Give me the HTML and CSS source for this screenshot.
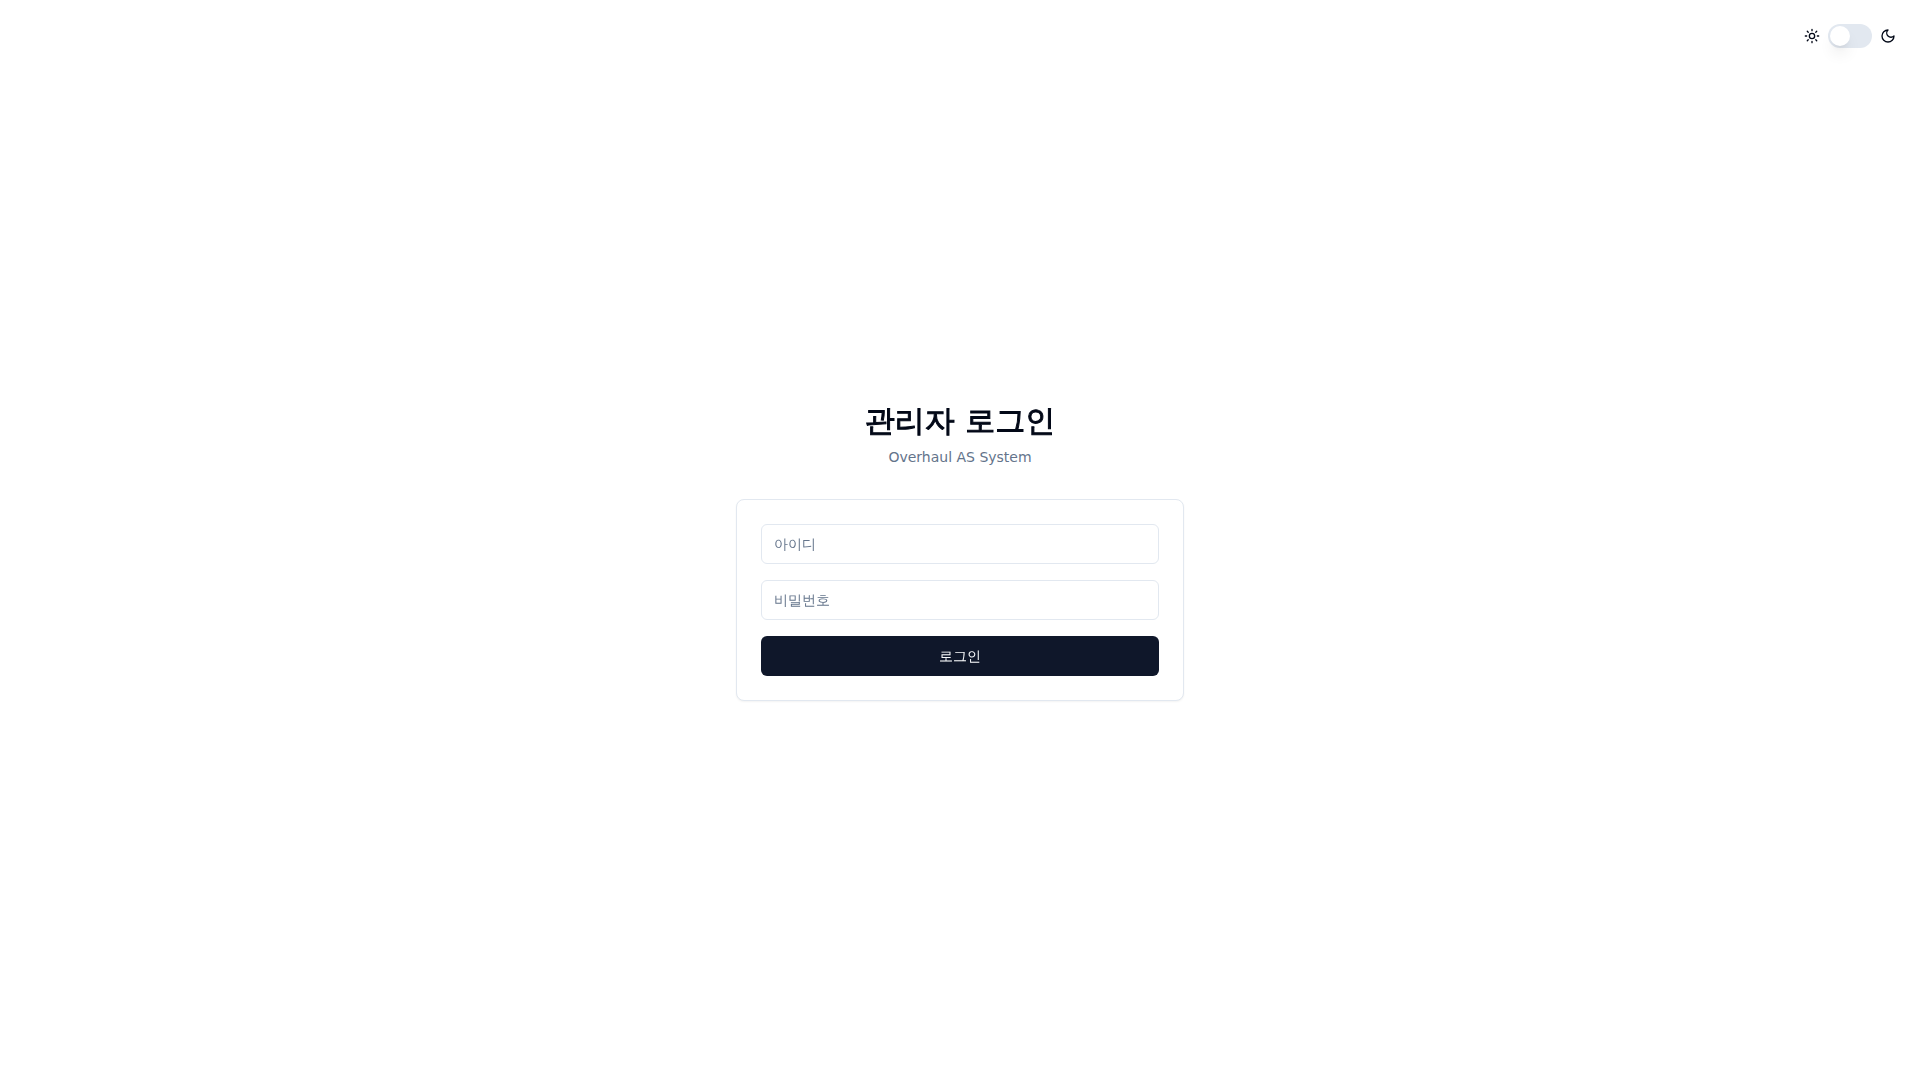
FILE: index.html
```html
<!DOCTYPE html>
<html lang="ko">
<head>
<meta charset="utf-8">
<meta name="viewport" content="width=device-width, initial-scale=1">
<title>관리자 로그인</title>
<link rel="stylesheet" href="styles.css">
</head>
<body>
<div class="theme-toggle">
  <svg class="icon" viewBox="0 0 24 24" aria-hidden="true"><circle cx="12" cy="12" r="4"/><path d="M12 2v2M12 20v2M4.93 4.93l1.41 1.41M17.66 17.66l1.41 1.41M2 12h2M20 12h2M6.34 17.66l-1.41 1.41M19.07 4.93l-1.41 1.41"/></svg>
  <input class="switch" type="checkbox" role="switch" aria-label="다크 모드">
  <svg class="icon" viewBox="0 0 24 24" aria-hidden="true"><path d="M12 3a6 6 0 0 0 9 9 9 9 0 1 1-9-9Z"/></svg>
</div>
<main class="page">
  <div class="login">
    <header class="heading">
      <h1 class="title">관리자 로그인</h1>
      <p class="subtitle">Overhaul AS System</p>
    </header>
    <form class="card">
      <input class="field" type="text" placeholder="아이디" aria-label="아이디">
      <input class="field" type="password" placeholder="비밀번호" aria-label="비밀번호">
      <button class="submit" type="submit">로그인</button>
    </form>
  </div>
</main>
</body>
</html>
```
FILE: styles.css
```css
*, *::before, *::after {
  box-sizing: border-box;
}

body {
  margin: 0;
  background: #fff;
  color: #020817;
  font-family: "DejaVu Sans", "WenQuanYi Zen Hei", "Noto Sans CJK KR", sans-serif;
  font-size: 16px;
  line-height: 24px;
}

.theme-toggle {
  position: absolute;
  top: 24px;
  right: 24px;
  display: flex;
  align-items: center;
  gap: 8px;
}

.icon {
  width: 16px;
  height: 16px;
  fill: none;
  stroke: currentColor;
  stroke-width: 2;
  stroke-linecap: round;
  stroke-linejoin: round;
}

.switch {
  appearance: none;
  width: 44px;
  height: 24px;
  margin: 0;
  padding: 2px;
  border-radius: 12px;
  background: #e2e8f0;
  cursor: pointer;
}

.switch::before {
  content: "";
  display: block;
  width: 20px;
  height: 20px;
  border-radius: 50%;
  background: #fff;
  box-shadow: 0 10px 15px -3px rgb(0 0 0 / 0.1), 0 4px 6px -4px rgb(0 0 0 / 0.1);
}

.switch:checked {
  background: #0f172a;
}

.switch:checked::before {
  margin-left: 20px;
}

.page {
  display: flex;
  align-items: center;
  justify-content: center;
  min-height: 100vh;
  padding: 40px 16px 16px;
}

.login {
  width: 100%;
  max-width: 448px;
}

.heading {
  margin-bottom: 32px;
  text-align: center;
}

/* The Korean face has no bold cut, so a stroke thickens the strokes. */
.title {
  margin: 0;
  font-size: 30px;
  font-weight: 700;
  line-height: 36px;
  -webkit-text-stroke: 1px currentColor;
}

.subtitle {
  margin: 8px 0 0;
  color: #64748b;
  font-size: 14px;
  line-height: 20px;
}

.card {
  display: flex;
  flex-direction: column;
  gap: 16px;
  padding: 24px;
  border: 1px solid #e2e8f0;
  border-radius: 8px;
  background: #fff;
  box-shadow: 0 1px 2px rgb(0 0 0 / 0.05);
}

.field {
  width: 100%;
  height: 40px;
  padding: 8px 12px;
  border: 1px solid #e2e8f0;
  border-radius: 6px;
  background: #fff;
  color: inherit;
  font: inherit;
  font-size: 14px;
  line-height: 20px;
}

.field::placeholder {
  color: #64748b;
}

.submit {
  height: 40px;
  padding: 8px 16px;
  border: 0;
  border-radius: 6px;
  background: #0f172a;
  color: #f8fafc;
  font: inherit;
  font-size: 14px;
  font-weight: 500;
  line-height: 20px;
  cursor: pointer;
}
```
